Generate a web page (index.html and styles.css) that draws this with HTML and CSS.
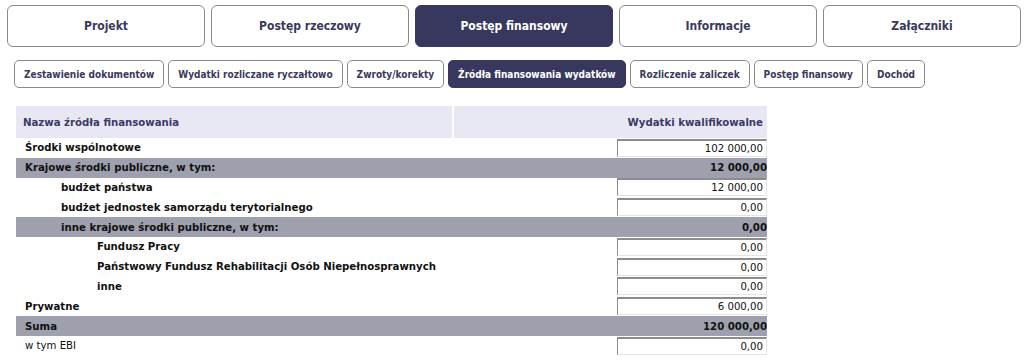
FILE: index.html
```html
<!DOCTYPE html>
<html lang="pl">
<head>
<meta charset="utf-8">
<title>Źródła finansowania wydatków</title>
<link rel="stylesheet" href="styles.css">
</head>
<body>
<nav class="tabs">
  <a class="tab">Projekt</a>
  <a class="tab">Postęp rzeczowy</a>
  <a class="tab active">Postęp finansowy</a>
  <a class="tab">Informacje</a>
  <a class="tab">Załączniki</a>
</nav>
<nav class="subtabs">
  <a class="subtab">Zestawienie dokumentów</a>
  <a class="subtab">Wydatki rozliczane ryczałtowo</a>
  <a class="subtab">Zwroty/korekty</a>
  <a class="subtab active">Źródła finansowania wydatków</a>
  <a class="subtab">Rozliczenie zaliczek</a>
  <a class="subtab">Postęp finansowy</a>
  <a class="subtab">Dochód</a>
</nav>
<div class="grid">
  <div class="headrow">
    <div class="head name">Nazwa źródła finansowania</div>
    <div class="head value">Wydatki kwalifikowalne</div>
  </div>

  <div class="row"><div class="label l0">Środki wspólnotowe</div><div class="input">102 000,00</div></div>
  <div class="row sum"><div class="label l0">Krajowe środki publiczne, w tym:</div><div class="total">12 000,00</div></div>
  <div class="row"><div class="label l1">budżet państwa</div><div class="input">12 000,00</div></div>
  <div class="row"><div class="label l1">budżet jednostek samorządu terytorialnego</div><div class="input">0,00</div></div>
  <div class="row sum"><div class="label l1">inne krajowe środki publiczne, w tym:</div><div class="total">0,00</div></div>
  <div class="row"><div class="label l2">Fundusz Pracy</div><div class="input">0,00</div></div>
  <div class="row"><div class="label l2">Państwowy Fundusz Rehabilitacji Osób Niepełnosprawnych</div><div class="input">0,00</div></div>
  <div class="row"><div class="label l2">inne</div><div class="input">0,00</div></div>
  <div class="row"><div class="label l0">Prywatne</div><div class="input">6 000,00</div></div>
  <div class="row sum"><div class="label l0">Suma</div><div class="total">120 000,00</div></div>
  <div class="row"><div class="label l0 plain">w tym EBI</div><div class="input">0,00</div></div>
</div>
</body>
</html>
```
FILE: styles.css
```css
html, body {
  margin: 0;
  padding: 0;
  background: #ffffff;
}
body {
  font-family: "DejaVu Sans Condensed", "DejaVu Sans", Tahoma, sans-serif;
  color: #111;
  width: 1024px;
  height: 362px;
  overflow: hidden;
}
.tabs {
  display: flex;
  gap: 6px;
  padding: 5px 0 0 7px;
}
.tab {
  box-sizing: border-box;
  width: 198px;
  height: 42px;
  border: 1px solid #8a8a8a;
  border-radius: 6px;
  display: flex;
  align-items: center;
  justify-content: center;
  font-weight: bold;
  font-size: 12px;
  color: #3a3a5a;
  background: #fff;
}
.tab.active {
  background: #38385f;
  border-color: #38385f;
  color: #fff;
}
.subtabs {
  display: flex;
  gap: 4px;
  padding: 13px 0 0 14px;
}
.subtab {
  box-sizing: border-box;
  height: 28px;
  padding: 0 9px;
  border: 1px solid #8a8a8a;
  border-radius: 5px;
  display: flex;
  align-items: center;
  font-weight: bold;
  font-size: 10px;
  color: #3a3a5a;
  background: #fff;
}
.subtab.active {
  background: #38385f;
  border-color: #38385f;
  color: #fff;
}
.grid {
  margin: 18px 0 0 16px;
  width: 751px;
  display: flex;
  flex-direction: column;
  font-size: 11.3px;
}
.headrow {
  display: grid;
  grid-template-columns: 436px 1fr;
  gap: 2px;
  height: 32px;
}
.head {
  background: #e8e8f4;
  color: #3a3a68;
  font-weight: bold;
  display: flex;
  align-items: center;
}
.head.name {
  padding-left: 7px;
}
.head.value {
  justify-content: flex-end;
  padding-right: 4px;
}
.row {
  display: grid;
  grid-template-columns: 1fr 150px;
  height: 19.8px;
  align-items: center;
}
.row.sum {
  background: #9ea0ad;
}
.label {
  font-weight: bold;
  white-space: nowrap;
}
.label.plain {
  font-weight: normal;
}
.l0 { padding-left: 9px; }
.l1 { padding-left: 45px; }
.l2 { padding-left: 81px; }
.input {
  box-sizing: border-box;
  height: 18px;
  border-top: 2px solid #8c8c8c;
  border-left: 1px solid #8c8c8c;
  border-right: 1px solid #e4e4e4;
  border-bottom: 1px solid #e4e4e4;
  text-align: right;
  padding-right: 3px;
  line-height: 15px;
  background: #fff;
}
.total {
  font-weight: bold;
  text-align: right;
}
```
